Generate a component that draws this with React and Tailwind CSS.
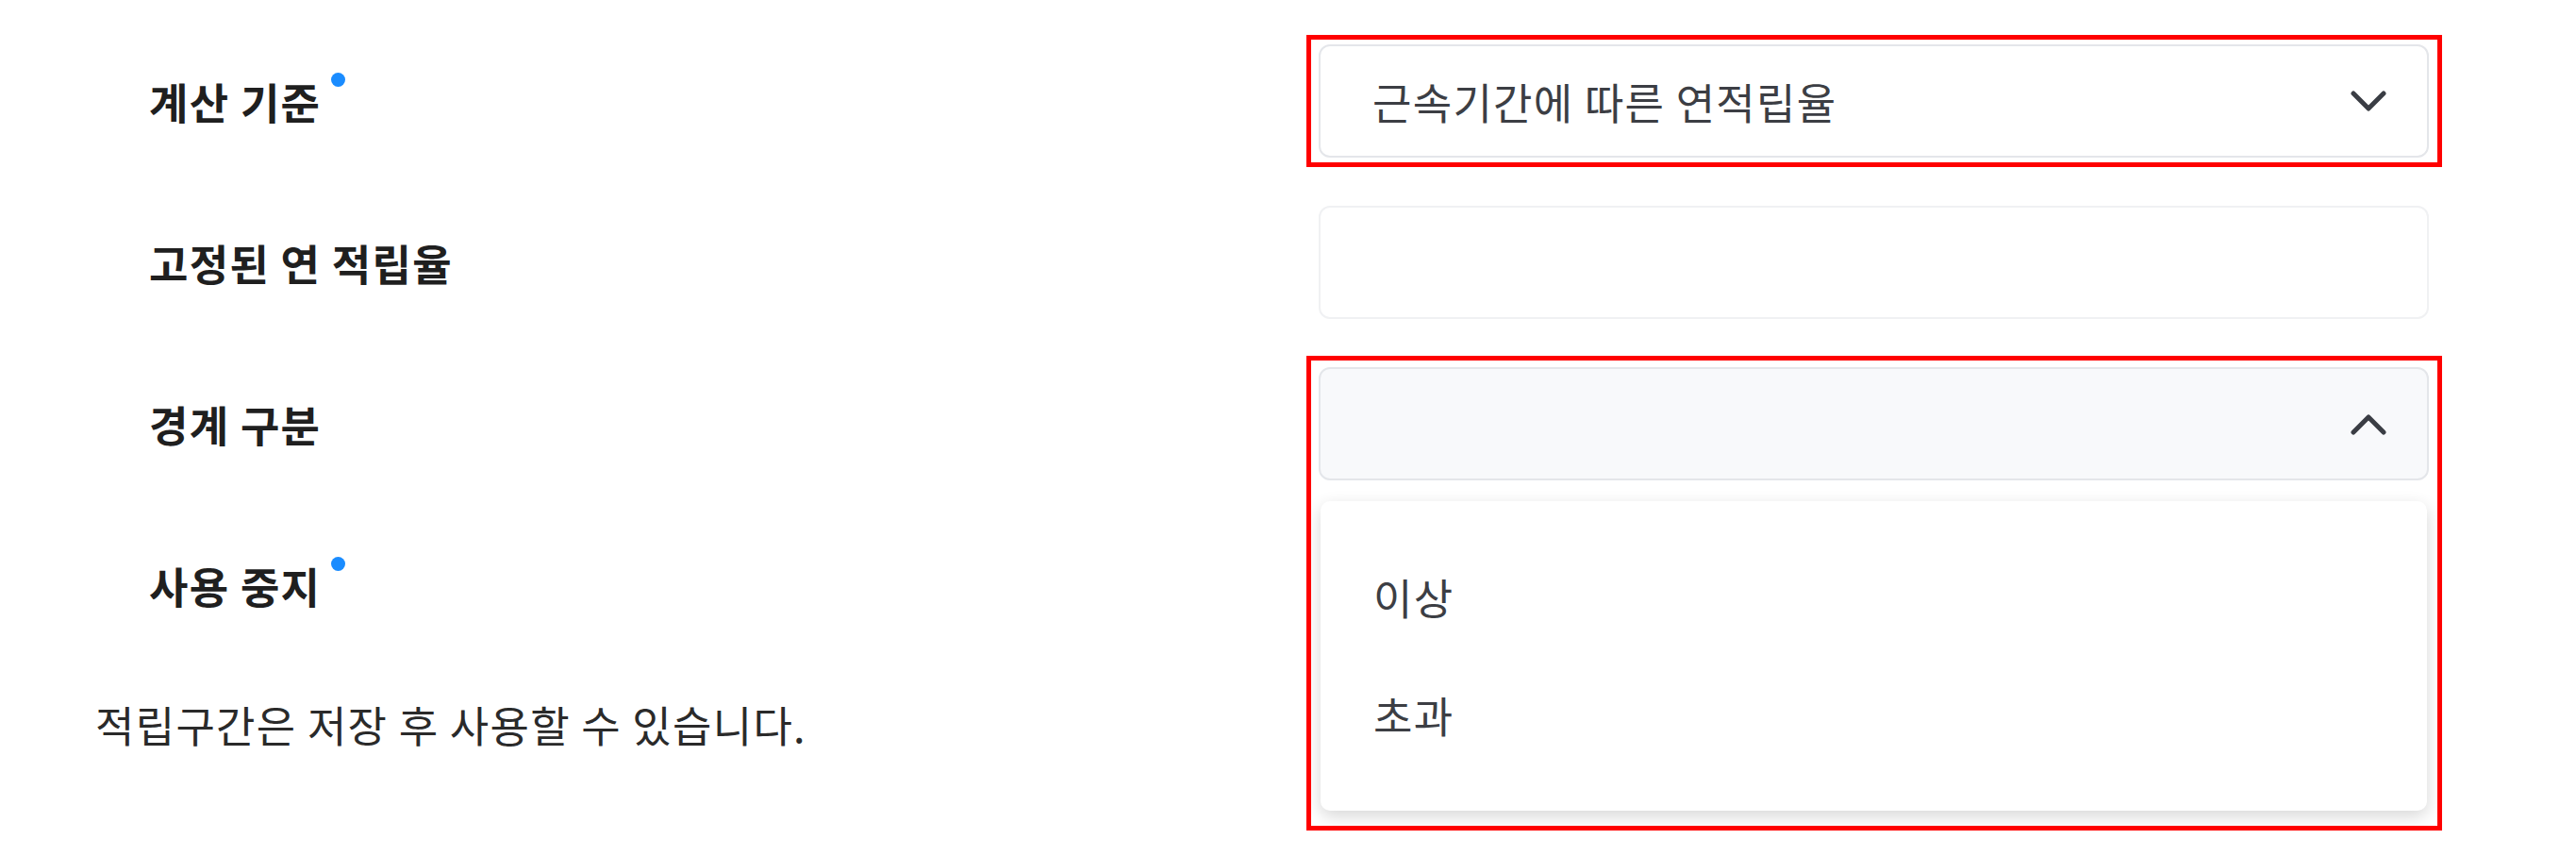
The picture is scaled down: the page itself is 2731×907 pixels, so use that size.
import { useState } from 'react'

const OPTIONS = ['이상', '초과']

function Chevron({ up = false }) {
  return (
    <svg width="38" height="23" viewBox="0 0 38 23" fill="none" className="shrink-0">
      <polyline
        points={up ? '3,20 19,4 35,20' : '3,3 19,19 35,3'}
        stroke="#3a3d44"
        strokeWidth="5"
        strokeLinecap="round"
        strokeLinejoin="round"
      />
    </svg>
  )
}

function Label({ text, required }) {
  return (
    <div className="flex items-center">
      <span className="text-[45px] font-bold leading-none text-[#1f1f1f] tracking-[1.3px]">{text}</span>
      {required && <span className="ml-[11px] h-[15px] w-[15px] -translate-y-[23px] rounded-full bg-[#1a8cff]" />}
    </div>
  )
}

function Row({ label, required, children }) {
  return (
    <div className="flex items-center justify-between">
      <Label text={label} required={required} />
      <div className="relative w-[1177px]">{children}</div>
    </div>
  )
}

export default function App() {
  const [open] = useState(true)

  return (
    <div className="min-h-screen bg-white font-['Noto_Sans_CJK_KR','Noto_Sans',sans-serif]">
      <div className="flex flex-col gap-[51px] pt-[47px] pl-[158px] pr-[156px]">
        <Row label="계산 기준" required>
          <button className="flex h-[120px] w-full items-center justify-between rounded-[12px] border-2 border-[#e4e6ea] bg-white pl-[55px] pr-[43px]">
            <span className="text-[45px] leading-none text-[#3c3e44] tracking-[1.3px]">근속기간에 따른 연적립율</span>
            <Chevron />
          </button>
          <div className="pointer-events-none absolute -top-[10px] -bottom-[10px] -left-[13px] -right-[14px] border-[5px] border-[#ff0000]" />
        </Row>

        <Row label="고정된 연 적립율">
          <input className="h-[120px] w-full rounded-[12px] border-2 border-[#f0f1f3] bg-white px-[55px] text-[45px] outline-none" />
        </Row>

        <Row label="경계 구분">
          <button className="flex h-[120px] w-full items-center justify-end rounded-[12px] border-2 border-[#e4e6ea] bg-[#f8f9fb] pr-[43px]">
            <Chevron up={open} />
          </button>
          {open && (
            <ul className="absolute left-[2px] right-[2px] top-[142px] z-10 rounded-[10px] bg-white py-[39px] shadow-[0_6px_18px_rgba(0,0,0,0.16)]">
              {OPTIONS.map((opt) => (
                <li key={opt} className="flex h-[125px] items-center pl-[56px] text-[45px] leading-none text-[#3c3e44] tracking-[1.3px]">
                  {opt}
                </li>
              ))}
            </ul>
          )}
          <div className="pointer-events-none absolute -top-[12px] -left-[13px] -right-[14px] z-20 h-[503px] border-[5px] border-[#ff0000]" />
        </Row>

        <Row label="사용 중지" required>
          <div className="h-[120px]" />
        </Row>
      </div>

      <p className="mt-[58px] pl-[101px] text-[45px] leading-[60px] text-[#2a2a2a] tracking-[1.3px]">
        적립구간은 저장 후 사용할 수 있습니다.
      </p>
    </div>
  )
}
